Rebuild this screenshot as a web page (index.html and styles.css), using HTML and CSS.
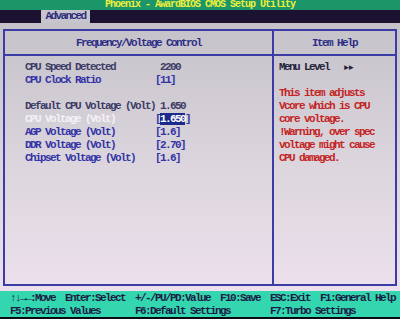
FILE: index.html
```html
<!DOCTYPE html>
<html lang="en">
<head>
    <meta charset="UTF-8">
    <meta name="viewport" content="width=device-width, initial-scale=1.0">
    <title>CMOS Setup Utility</title>
    <link rel="stylesheet" href="styles.css">
</head>
<body>
    <div class="title">Phoenix - AwardBIOS CMOS Setup Utility</div>
    <div class="menubar">
        <span class="tab">Advanced</span>
    </div>

    <div class="screen">
        <div class="box">
            <div class="head left">Frequency/Voltage Control</div>
            <div class="head right">Item Help</div>

            <div class="items">
                <div class="row info"><span class="label">CPU Speed Detected</span><span class="value"> 2200</span></div>
                <div class="row"><span class="label">CPU Clock Ratio</span><span class="value">[11]</span></div>
                <div class="row blank"></div>
                <div class="row info"><span class="label">Default CPU Voltage (Volt)</span><span class="plain"> 1.650</span></div>
                <div class="row current"><span class="label">CPU Voltage (Volt)</span><span class="value">[<span class="sel">1.650</span>]</span></div>
                <div class="row"><span class="label">AGP Voltage (Volt)</span><span class="value">[1.6]</span></div>
                <div class="row"><span class="label">DDR Voltage (Volt)</span><span class="value">[2.70]</span></div>
                <div class="row"><span class="label">Chipset Voltage (Volt)</span><span class="value">[1.6]</span></div>
            </div>

            <div class="help">
                <div class="menu-level">Menu Level   <span class="arrows">&#9658;&#9658;</span></div>
                <div class="row blank"></div>
                <div class="note">This item adjusts</div>
                <div class="note">Vcore which is CPU</div>
                <div class="note">core voltage.</div>
                <div class="note">!Warning, over spec</div>
                <div class="note">voltage might cause</div>
                <div class="note">CPU damaged.</div>
            </div>
        </div>
    </div>

    <div class="keys">
        <div class="keyrow">↑↓→←:Move  Enter:Select  +/-/PU/PD:Value  F10:Save  ESC:Exit  F1:General Help</div>
        <div class="keyrow">F5:Previous Values       F6:Default Settings        F7:Turbo Settings</div>
    </div>
</body>
</html>
```

FILE: styles.css
```css
body {
    margin: 0;
    width: 400px;
    height: 319px;
    overflow: hidden;
    background: #0c0a14;
    font-family: "Liberation Mono", "DejaVu Sans Mono", monospace;
    font-weight: bold;
    font-size: 11px;
    letter-spacing: -1.6px;
    line-height: 13px;
}

.title {
    height: 10px;
    font-size: 10px;
    letter-spacing: -1px;
    line-height: 10px;
    background: #1b9668;
    color: #eeee3c;
    text-align: center;
}

.menubar {
    height: 13px;
    background: #1a1230;
    padding-left: 41px;
}

.tab {
    display: inline-block;
    width: 49px;
    height: 13px;
    background: #c6c4cc;
    color: #2c2c7c;
    text-align: center;
}

.screen {
    height: 268px;
    padding: 6px 3px 0 3px;
    box-sizing: border-box;
    background: linear-gradient(#c5c2c9, #ddd6de 55%, #ece0ec);
}

.box {
    height: 257px;
    box-sizing: border-box;
    border: 2px solid #3c3ca6;
    display: grid;
    grid-template-columns: 267px 1fr;
    grid-template-rows: 25px 1fr;
}

.head {
    border-bottom: 2px solid #3c3ca6;
    color: #2e2e86;
    text-align: center;
    line-height: 24px;
}

.head.right,
.help {
    border-left: 2px solid #3c3ca6;
}

.items {
    padding: 5px 0 0 20px;
}

.row {
    display: flex;
    height: 13px;
    color: #3434a6;
    white-space: pre;
}

.row .label {
    width: 130px;
}

.row.info {
    color: #3c3c66;
}

.row.current {
    color: #f4f2f6;
}

.row.current .value {
    color: #3434a6;
}

.sel {
    background: #1c2a8c;
    color: #ffffff;
}

.help {
    padding: 5px 0 0 5px;
}

.menu-level {
    color: #24243c;
    white-space: pre;
}

.arrows {
    font-size: 8px;
    letter-spacing: 0;
}

.note {
    color: #c42424;
}

.keys {
    height: 26px;
    padding: 1px 0 0 10px;
    box-sizing: border-box;
    background: #34d6b0;
    color: #1c1c46;
}

.keyrow {
    height: 13px;
    line-height: 13px;
    white-space: pre;
}
```
